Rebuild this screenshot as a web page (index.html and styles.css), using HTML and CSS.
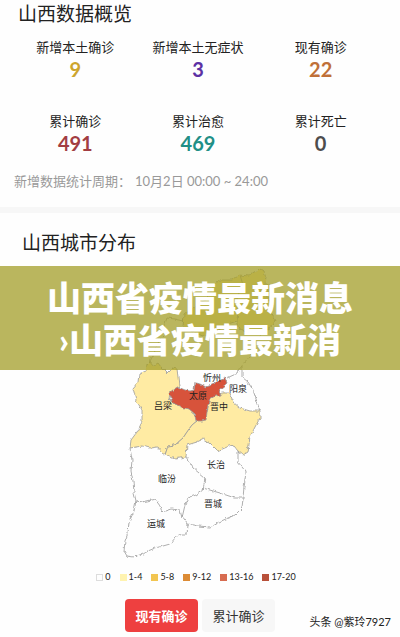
FILE: index.html
```html
<!DOCTYPE html>
<html lang="zh-CN">
<head>
<meta charset="utf-8">
<meta name="viewport" content="width=device-width, initial-scale=1">
<title>山西数据概览</title>
<link rel="stylesheet" href="styles.css">
</head>
<body>
<main>
  <section class="overview">
    <h1 class="title">山西数据概览</h1>
    <dl class="stats">
      <div class="stat"><dt>新增本土确诊</dt><dd class="gold">9</dd></div>
      <div class="stat"><dt>新增本土无症状</dt><dd class="purple">3</dd></div>
      <div class="stat"><dt>现有确诊</dt><dd class="orange">22</dd></div>
      <div class="stat"><dt>累计确诊</dt><dd class="red">491</dd></div>
      <div class="stat"><dt>累计治愈</dt><dd class="teal">469</dd></div>
      <div class="stat"><dt>累计死亡</dt><dd class="dark">0</dd></div>
    </dl>
    <p class="period"><span>新增数据统计周期：</span><span>10月2日 00:00 ~ 24:00</span></p>
  </section>
  <section class="cities">
    <h2 class="title">山西城市分布</h2>
    <div class="map-area">
      <svg class="map" viewBox="120 262 160 300" role="img" aria-label="山西城市分布">
        <defs>
          <filter id="coast" x="-5%" y="-5%" width="110%" height="110%" color-interpolation-filters="sRGB">
            <feTurbulence type="fractalNoise" baseFrequency="0.22" numOctaves="2" seed="4" result="noise"/>
            <feDisplacementMap in="SourceGraphic" in2="noise" scale="4" xChannelSelector="R" yChannelSelector="G"/>
          </filter>
        </defs>
        <g class="regions" filter="url(#coast)">
          <path class="mid" d="M183 327L184 314L190 309L198 304L207 300L211 289L219 280L232 280L240 275L249 276L254 272L257 271L260 268L264 271L266 277L265 284L268 284L268 297L273 305L270 311L275 320L271 327L264 332L256 330L249 334L240 329L237 321L225 325L214 332L203 336L195 333Z"/>
          <path class="none" d="M240 275L243 285L237 297L238 309L237 321"/>
          <path class="none" d="M184 321L175 319L167 318L164 326L166 334L160 340L155 351L150 359L149 364"/>
          <path class="none" d="M264 332L257 340L252 348L250 356L242 365L238 373L227 378"/>
          <path class="low" d="M147 365L150 362L153 366L158 363L161 367L167 373L172 368L177 369L178 377L179 386L170 393L169 399L173 403L185 407L192 410L197 421L192 425L187 432L183 438L175 445L168 446L165 455L162 453L157 447L150 448L142 446L130 448L131 440L137 432L142 422L142 410L136 400L133 388L138 382L139 374L146 371Z"/>
          <path class="low" d="M223 393L229 393L233 402L240 408L250 411L260 411L260 418L255 427L250 437L248 452L243 455L238 451L233 445L227 447L218 451L210 443L203 439L197 442L187 445L186 457L180 458L175 459L165 455L168 446L175 445L183 438L187 432L192 425L197 421L207 412L210 398Z"/>
          <path class="none" d="M242 365L242 377L248 382L253 390L257 402L260 411"/>
          <path class="none" d="M130 448L132 460L131 471L133 481L134 492L136 501L142 502L147 501L155 499L160 506L162 512L171 509L180 510L182 518L185 505L188 498L196 495L203 490L205 478L193 468L186 457"/>
          <path class="none" d="M203 488L220 493L235 498L243 498L244 487L246 472L238 462L238 451"/>
          <path class="none" d="M182 516L188 524L198 526L210 527L219 522L228 518L235 515L242 508L243 498"/>
          <path class="none" d="M136 501L134 511L129 522L128 533L125 541L124 551L127 556L134 557L145 553L148 551L155 548L163 546L170 544L176 537L182 534L187 534L188 524"/>
          <path class="high" d="M169 393L174 389L178 387L185 390L190 391L194 390L195 383L200 384L206 387L212 385L219 381L225 378L227 383L219 390L222 395L215 396L210 399L208 405L207 412L206 420L201 421L196 421L195 414L189 409L181 407L173 403L171 398Z"/>
        </g>
        <g class="names">
          <text x="212" y="381">忻州</text><text x="238" y="392">阳泉</text><text x="198" y="399">太原</text><text x="163" y="409">吕梁</text><text x="219" y="410">晋中</text><text x="216" y="468">长治</text><text x="167" y="482">临汾</text><text x="213" y="507">晋城</text><text x="156" y="527">运城</text>
        </g>
      </svg>
      <p class="banner">山西省疫情最新消息<br>›山西省疫情最新消</p>
    </div>
    <ul class="legend">
      <li><i class="key k0"></i>0</li><li><i class="key k1"></i>1-4</li><li><i class="key k2"></i>5-8</li><li><i class="key k3"></i>9-12</li><li><i class="key k4"></i>13-16</li><li><i class="key k5"></i>17-20</li>
    </ul>
    <div class="tabs">
      <button type="button" class="tab active">现有确诊</button>
      <button type="button" class="tab">累计确诊</button>
      <span class="credit">头条 @紫玲7927</span>
    </div>
  </section>
</main>
</body>
</html>
```
FILE: styles.css
```css
* { box-sizing: border-box; }
body, h1, h2, p, dl, dd, ul { margin: 0; padding: 0; }
body {
  background: #fefefe;
  color: #222;
  font-family: Lato, "Noto Sans CJK SC", sans-serif;
  font-size: 13px;
  line-height: 20px;
}
.overview {
  padding-bottom: 16px;
  border-bottom: 6px solid #f7f7f7;
}
.title {
  padding-left: 18px;
  font-size: 19px;
  font-weight: 400;
  line-height: 28px;
}
.stats {
  display: grid;
  grid-template-columns: repeat(3, 1fr);
  row-gap: 30px;
  padding: 9px 18px 0 14px;
  text-align: center;
}
.stat dd {
  font-size: 20px;
  font-weight: 700;
  line-height: 24px;
}
.gold { color: #cda52d; }
.purple { color: #5c31a4; }
.orange { color: #c07038; }
.red { color: #a23d42; }
.teal { color: #218f86; }
.dark { color: #4d4d4d; }
.period {
  display: flex;
  gap: 4px;
  padding: 16px 14px 0;
  color: #999;
}
.cities { padding-top: 16px; }
.cities .title { padding-left: 22px; }
.map-area {
  position: relative;
  padding-top: 5px;
}
.map {
  display: block;
  width: 40%;
  margin: 0 auto;
}
.regions {
  stroke: #999;
  stroke-width: 0.8;
  stroke-linejoin: round;
}
.low { fill: #ffeba3; }
.mid { fill: #ffe9a0; }
.none { fill: none; }
.high { fill: #d7533b; }
.names {
  fill: #222;
  font-size: 9px;
  text-anchor: middle;
}
.banner {
  position: absolute;
  top: 9px;
  left: 0;
  right: 0;
  padding: 11px 0 9px;
  background: rgba(163, 157, 40, 0.75);
  color: #fff;
  font-size: 34px;
  font-weight: 900;
  line-height: 42px;
  text-align: center;
}
.legend {
  display: flex;
  justify-content: center;
  gap: 9px;
  padding: 5px 8px 0 0;
  list-style: none;
  font-size: 9px;
}
.legend li {
  display: flex;
  align-items: center;
  gap: 2px;
}
.key {
  width: 7px;
  height: 7px;
}
.k0 { border: 1px solid #ddd; }
.k1 { background: #fff3b0; }
.k2 { background: #f2c550; }
.k3 { background: #dc8b35; }
.k4 { background: #d76c50; }
.k5 { background: #b8503a; }
.tabs {
  position: relative;
  display: flex;
  justify-content: center;
  gap: 4px;
  padding-top: 12px;
}
.tab {
  width: 73px;
  height: 33px;
  padding: 0;
  border: 0;
  border-radius: 4px;
  background: #f7f7f7;
  color: #333;
  font: inherit;
}
.active {
  background: #ee4040;
  color: #fff;
  font-weight: 700;
}
.credit {
  position: absolute;
  right: 9px;
  bottom: 0;
  font-size: 11px;
}
```
